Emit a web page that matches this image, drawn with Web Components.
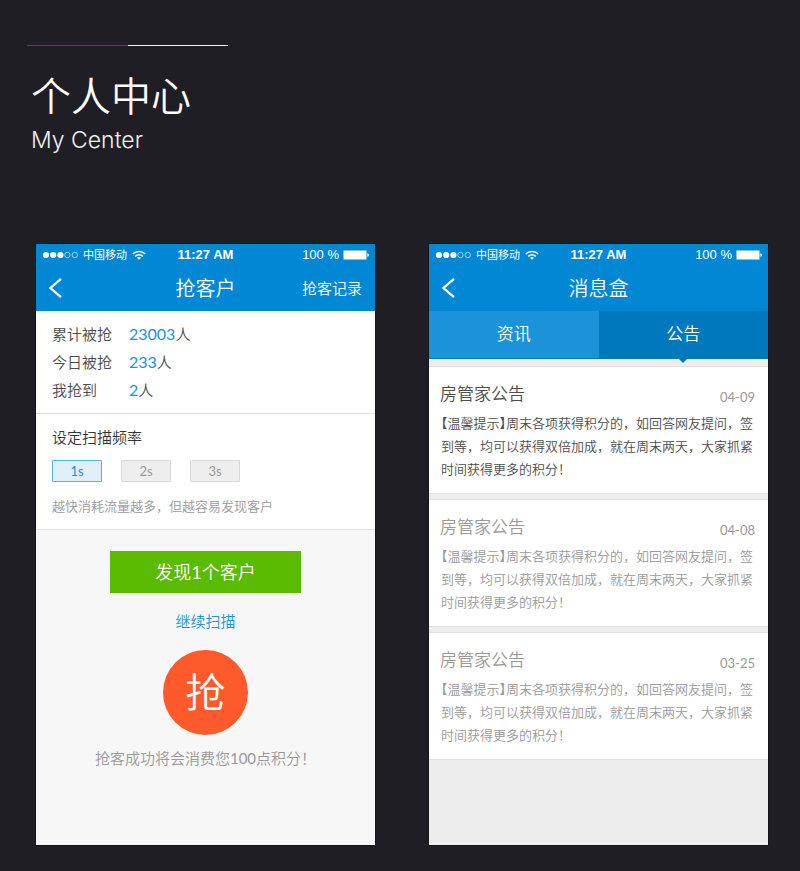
<!DOCTYPE html>
<html lang="zh-CN">
<head>
<meta charset="utf-8">
<meta name="viewport" content="width=device-width, initial-scale=1">
<title>个人中心 My Center</title>
<style>
  body {
    margin: 0;
    min-height: 100vh;
    box-sizing: border-box;
    padding: 45px 32px 26px 36px;
    background: #1f1e24;
    color: #4c4c4c;
    font-family: "Lato", "Noto Sans CJK SC", sans-serif;
    font-weight: 350;
    --blue: #0287d4;
    --light-blue: #1b93db;
    --deep-blue: #0078be;
    --rule: #e0e0e0;
  }
</style>
</head>
<body>
<center-page></center-page>

<script>
const define = (name, html, setup) => {
  const template = document.createElement('template');
  template.innerHTML = html;
  customElements.define(name, class extends HTMLElement {
    connectedCallback() {
      if (this.shadowRoot) return;
      this.attachShadow({ mode: 'open' }).append(template.content.cloneNode(true));
      if (setup) setup(this, this.shadowRoot);
    }
  });
};

define('page-heading', `
  <style>
    :host { display: block; color: #fff; margin-left: -9px; }
    .rule { display: flex; width: 201px; height: 1px; background: #f2f2f2; }
    .rule::before { content: ""; width: 50%; background: #125a96; }
    h1 { margin: 26px 0 0 4px; font-size: 40px; line-height: 48px; font-weight: 350; }
    p { margin: 6px 0 0 4px; font: 300 23px/28px "Inter", "Liberation Sans", sans-serif; color: #f2f2f2; }
  </style>
  <div class="rule"></div>
  <h1><slot name="title"></slot></h1>
  <p><slot name="subtitle"></slot></p>
`);

define('status-bar', `
  <style>
    :host { display: grid; grid-template-columns: 1fr auto 1fr; align-items: center; height: 21px; padding: 0 6px; color: #fff; font: 13px/21px "Liberation Sans", sans-serif; }
    div { display: flex; align-items: center; }
    .carrier { gap: 5px; font: 11px/21px "Noto Sans CJK SC", sans-serif; }
    .power { justify-content: flex-end; gap: 4px; }
    b { font-weight: 700; }
    svg { display: block; }
  </style>
  <div class="carrier">
    <svg width="36" height="8" viewBox="0 0 36 8"><g fill="#fff"><circle cx="4" cy="4" r="3.1"/><circle cx="11.200" cy="4" r="3.1"/><circle cx="18.400" cy="4" r="3.1"/></g><g fill="none" stroke="#fff" stroke-width=".7" opacity=".85"><circle cx="25.4" cy="4" r="2.7"/><circle cx="32.8" cy="4" r="2.7"/></g></svg>
    <span>中国移动</span>
    <svg width="14" height="10" viewBox="0 0 14 10"><g fill="none" stroke="#fff" stroke-width="1.6"><path d="M.8 3.9C4.300.6 9.700.6 13.200 3.900"/><path d="M3.200 6.300C5.400 4.300 8.600 4.300 10.800 6.300"/></g><path d="M4.900 7.700C6.200 6.700 7.800 6.700 9.100 7.700L7 9.800Z" fill="#fff"/></svg>
  </div>
  <b>11:27 AM</b>
  <div class="power">
    <span>100 %</span>
    <svg width="26" height="10" viewBox="0 0 26 10"><rect x=".4" y=".4" width="23.200" height="9.200" rx="1" fill="none" stroke="#fff" stroke-width=".7" opacity=".8"/><rect x="1" y="1" width="22" height="8" fill="#fff"/><path d="M24.400 3.200Q26 3.600 26 5T24.400 6.800Z" fill="#fff"/></svg>
  </div>
`);

define('nav-bar', `
  <style>
    :host { display: grid; grid-template-columns: 1fr auto 1fr; align-items: center; height: 46px; padding: 0 13px; color: #fff; }
    button { justify-self: start; padding: 0; border: 0; background: none; color: inherit; cursor: pointer; }
    svg { display: block; }
    h2 { margin: 0; font-size: 20px; line-height: 44px; font-weight: 350; }
    .action { justify-self: end; font-size: 15px; line-height: 44px; }
  </style>
  <button type="button" aria-label="返回"><svg width="13" height="20" viewBox="0 0 13 20"><path d="M12 .8L1.500 10L12 19.200" fill="none" stroke="#fff" stroke-width="2.200"/></svg></button>
  <h2><slot></slot></h2>
  <div class="action"><slot name="action"></slot></div>
`);

define('phone-screen', `
  <style>
    :host { display: flex; flex-direction: column; min-width: 0; background: #f7f7f7; box-shadow: 0 0 0 1px #141419; }
    header { background: var(--blue); }
    main { flex: 1; display: flex; flex-direction: column; }
  </style>
  <header><status-bar></status-bar><slot name="nav"></slot></header>
  <main><slot></slot></main>
`);

define('stat-row', `
  <style>
    :host { display: flex; font-size: 15px; line-height: 28px; }
    .label { width: 77px; }
    .value { font-size: 16px; font-weight: 400; color: var(--light-blue); }
  </style>
  <span class="label"><slot></slot></span><span class="value"></span><span>人</span>
`, (host, root) => { root.querySelector('.value').textContent = host.getAttribute('value'); });

define('panel-section', `
  <style>
    :host { display: block; padding: 9px 16px; background: #fff; border-bottom: 1px solid var(--rule); }
  </style>
  <slot></slot>
`);

define('scan-rate', `
  <style>
    fieldset { margin: 0; padding: 0; border: 0; min-width: 0; }
    legend { padding: 0; font-size: 15px; line-height: 28px; color: #333; }
    .options { display: flex; gap: 19px; margin-top: 9px; }
    label { position: relative; box-sizing: border-box; width: 50px; height: 22px; border: 1px solid #d9d9d9; border-radius: 1px; background: #eee; color: #999; font-size: 13px; font-weight: 400; line-height: 20px; text-align: center; cursor: pointer; }
    label:has(:checked) { border-color: #58b1e6; background: #dfeffa; color: var(--light-blue); }
    input { position: absolute; inset: 0; margin: 0; opacity: 0; }
    p { margin: 13px 0 3px; font-size: 13px; line-height: 22px; color: #999; }
  </style>
  <fieldset>
    <legend>设定扫描频率</legend>
    <div class="options">
      <label><input type="radio" name="rate" checked>1s</label>
      <label><input type="radio" name="rate">2s</label>
      <label><input type="radio" name="rate">3s</label>
    </div>
    <p>越快消耗流量越多，但越容易发现客户</p>
  </fieldset>
`);

define('grab-actions', `
  <style>
    :host { display: flex; flex-direction: column; align-items: center; padding-top: 21px; }
    button { border: 0; padding: 0; color: #fff; font-family: inherit; font-weight: 350; cursor: pointer; }
    .found { width: 191px; height: 42px; background: #5bbb00; font-size: 18px; line-height: 42px; }
    a { margin-top: 16px; font-size: 15px; line-height: 24px; color: var(--light-blue); text-decoration: none; }
    .grab { width: 85px; height: 85px; margin-top: 17px; border-radius: 50%; background: #ff5a2b; font-size: 40px; line-height: 85px; }
    p { margin: 11px 0 0; font-size: 15px; line-height: 24px; color: #999; }
    .number { font-weight: 400; }
  </style>
  <button class="found" type="button">发现<span class="number">1</span>个客户</button>
  <a href="#scan">继续扫描</a>
  <button class="grab" type="button">抢</button>
  <p>抢客成功将会消费您<span class="number">100</span>点积分！</p>
`);

define('tab-strip', `
  <style>
    :host { display: grid; grid-template-columns: 1fr 1fr; border-bottom: 1px solid var(--deep-blue); }
    button { position: relative; height: 47px; border: 0; padding: 0 0 4px; background: #1b92d9; color: #fff; font: inherit; font-size: 17px; cursor: pointer; }
    button[aria-selected="true"] { background: var(--deep-blue); }
    button[aria-selected="true"]::after { content: ""; position: absolute; top: 100%; left: 50%; margin-left: -5px; border: 5px solid transparent; border-top-color: var(--deep-blue); border-bottom: 0; }
  </style>
  <button type="button" role="tab" aria-selected="false">资讯</button>
  <button type="button" role="tab" aria-selected="true">公告</button>
`, host => host.setAttribute('role', 'tablist'));

define('notice-list', `
  <style>
    :host { flex: 1; display: flex; flex-direction: column; gap: 7px; padding-top: 8px; background: #ededed; }
  </style>
  <slot></slot>
`);

define('notice-card', `
  <style>
    :host { display: block; padding: 15px 13px 12px 11px; background: #fff; color: #4c4c4c; box-shadow: 0 0 0 1px #e2e2e2; clip-path: inset(-1px 0); }
    :host([read]) { color: #999; }
    header { display: flex; justify-content: space-between; line-height: 24px; }
    h3 { margin: 0; font-size: 17px; font-weight: 350; }
    time { padding-top: 3px; font-size: 13px; font-weight: 400; color: #999; }
    p { margin: 3px 0 0 1px; font-size: 13px; line-height: 23px; }
    .tag { font-feature-settings: "halt"; }
  </style>
  <header><h3>房管家公告</h3><time></time></header>
  <p><span class="tag">【温馨提示】</span>周末各项获得积分的，如回答网友提问，签<wbr>到等，均可以获得双倍加成，就在周末两天，大家抓紧<wbr>时间获得更多的积分！</p>
`, (host, root) => { root.querySelector('time').textContent = host.getAttribute('date'); });

define('center-page', `
  <style>
    :host { display: block; }
    .screens { display: grid; grid-template-columns: 1fr 1fr; gap: 54px; margin-top: 90px; min-height: 601px; }
    a { color: inherit; text-decoration: none; }
  </style>
  <page-heading><span slot="title">个人中心</span><span slot="subtitle">My Center</span></page-heading>
  <div class="screens">
    <phone-screen>
      <nav-bar slot="nav">抢客户<a slot="action" href="#records">抢客记录</a></nav-bar>
      <panel-section>
        <stat-row value="23003">累计被抢</stat-row>
        <stat-row value="233">今日被抢</stat-row>
        <stat-row value="2">我抢到</stat-row>
      </panel-section>
      <panel-section><scan-rate></scan-rate></panel-section>
      <grab-actions></grab-actions>
    </phone-screen>
    <phone-screen>
      <nav-bar slot="nav">消息盒</nav-bar>
      <tab-strip></tab-strip>
      <notice-list>
        <notice-card date="04-09"></notice-card>
        <notice-card date="04-08" read></notice-card>
        <notice-card date="03-25" read></notice-card>
      </notice-list>
    </phone-screen>
  </div>
`);
</script>
</body>
</html>
